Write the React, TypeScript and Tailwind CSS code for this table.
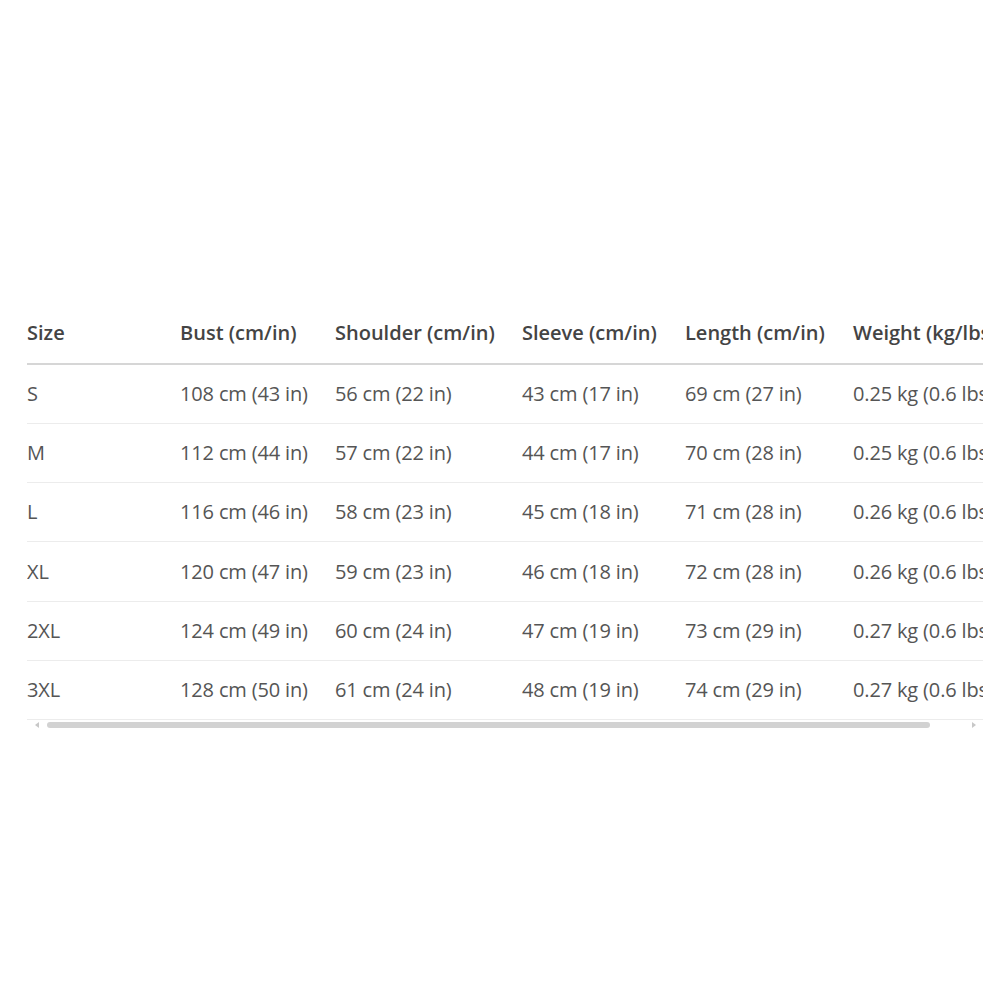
import React from 'react';

const columns = [
  { label: 'Size', width: 'w-[153px]' },
  { label: 'Bust (cm/in)', width: 'w-[155px]' },
  { label: 'Shoulder (cm/in)', width: 'w-[187px]' },
  { label: 'Sleeve (cm/in)', width: 'w-[163px]' },
  { label: 'Length (cm/in)', width: 'w-[168px]' },
  { label: 'Weight (kg/lbs)', width: 'w-[190px]' },
];

const rows = [
  ['S', '108 cm (43 in)', '56 cm (22 in)', '43 cm (17 in)', '69 cm (27 in)', '0.25 kg (0.6 lbs)'],
  ['M', '112 cm (44 in)', '57 cm (22 in)', '44 cm (17 in)', '70 cm (28 in)', '0.25 kg (0.6 lbs)'],
  ['L', '116 cm (46 in)', '58 cm (23 in)', '45 cm (18 in)', '71 cm (28 in)', '0.26 kg (0.6 lbs)'],
  ['XL', '120 cm (47 in)', '59 cm (23 in)', '46 cm (18 in)', '72 cm (28 in)', '0.26 kg (0.6 lbs)'],
  ['2XL', '124 cm (49 in)', '60 cm (24 in)', '47 cm (19 in)', '73 cm (29 in)', '0.27 kg (0.6 lbs)'],
  ['3XL', '128 cm (50 in)', '61 cm (24 in)', '48 cm (19 in)', '74 cm (29 in)', '0.27 kg (0.6 lbs)'],
];

const App: React.FC = () => {
  return (
    <div className="min-h-screen bg-white pt-[303px] pl-[27px] font-['Open_Sans',_'Liberation_Sans',_sans-serif]">
      <div className="w-[956px] overflow-hidden">
        <table className="table-fixed border-collapse w-[1016px] text-left whitespace-nowrap">
          <thead>
            <tr className="h-[61px] border-b-2 border-[#d6d6d6]">
              {columns.map((col) => (
                <th key={col.label} className={`${col.width} p-0 text-[20px] font-semibold text-[#444444]`}>
                  {col.label}
                </th>
              ))}
            </tr>
          </thead>
          <tbody>
            {rows.map((row) => (
              <tr key={row[0]} className="h-[59.3px] border-b border-[#ececec]">
                {row.map((cell, i) => (
                  <td key={i} className="p-0 text-[20px] font-normal text-[#555555] tracking-[-0.15px]">
                    {cell}
                  </td>
                ))}
              </tr>
            ))}
          </tbody>
        </table>
      </div>
      {/* horizontal scrollbar */}
      <div className="w-[956px] h-[10px] flex items-center">
        <div className="w-[20px] flex justify-center">
          <svg width="5" height="6" viewBox="0 0 5 6">
            <path d="M4 0 L0 3 L4 6 Z" fill="#c8c8c8" />
          </svg>
        </div>
        <div className="flex-1 h-[6px] flex">
          <div className="w-[883px] h-[6px] rounded-full bg-[#d2d2d2]"></div>
        </div>
        <div className="w-[20px] flex justify-center">
          <svg width="5" height="6" viewBox="0 0 5 6">
            <path d="M1 0 L5 3 L1 6 Z" fill="#c8c8c8" />
          </svg>
        </div>
      </div>
    </div>
  );
};

export default App;
